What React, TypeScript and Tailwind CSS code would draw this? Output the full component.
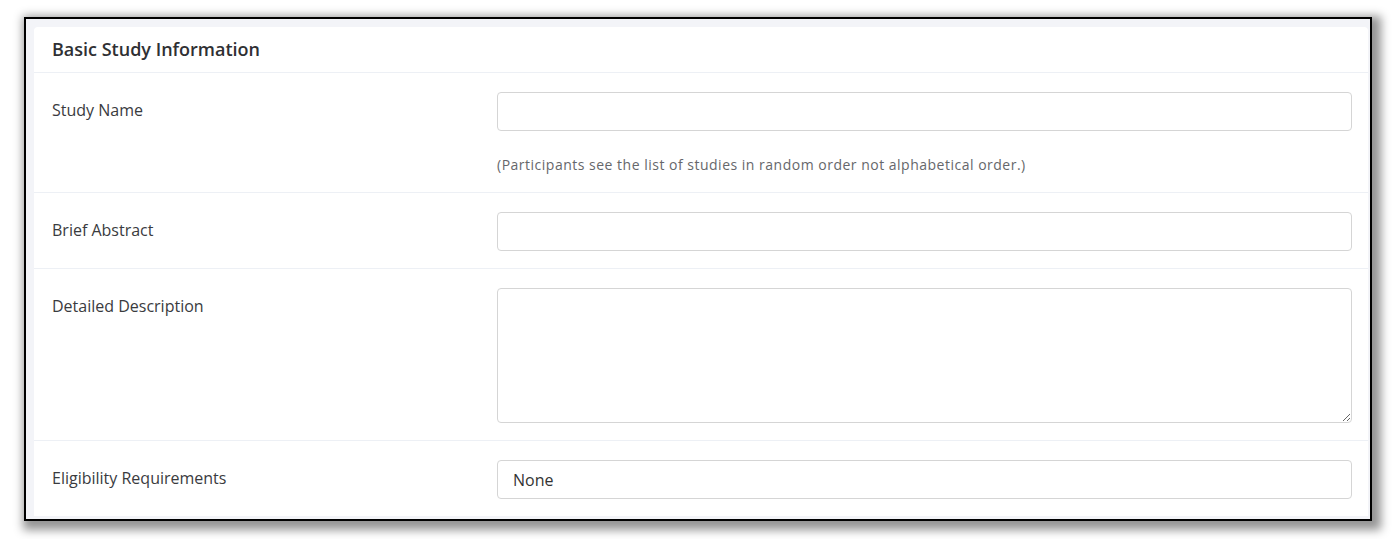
const rows = [
  { label: "Study Name", kind: "input", value: "", help: "(Participants see the list of studies in random order not alphabetical order.)" },
  { label: "Brief Abstract", kind: "input", value: "" },
  { label: "Detailed Description", kind: "textarea", value: "" },
  { label: "Eligibility Requirements", kind: "input", value: "None" },
];

export default function App() {
  return (
    <div className="min-h-[539px] bg-white pl-[24px] pt-[17px] font-['Open_Sans',sans-serif]">
      <div className="w-[1348px] border-2 border-black bg-[#f3f4f8] pb-[3px] pl-[8px] pr-[2px] pt-[8px] shadow-[4px_4px_9px_5px_rgba(0,0,0,0.42)]">
        <div className="rounded-t-[4px] bg-white">
          <div className="flex h-[46px] items-center border-b border-[#edf0f5] pl-[18px]">
            <h2 className="text-[18px] font-semibold text-[#2f3033]">Basic Study Information</h2>
          </div>
          {rows.map((row, i) => (
            <div
              key={row.label}
              className={`grid grid-cols-[445px_855px] pl-[18px] pr-[16px] pt-[19px] pb-[17px] ${i < rows.length - 1 ? "border-b border-[#edf0f5]" : ""}`}
            >
              <div className="pt-[7px] text-[16px] leading-[22px] text-[#3a3b3e]">{row.label}</div>
              <div>
                {row.kind === "textarea" ? (
                  <textarea
                    className="block h-[135px] w-full rounded-[4px] border border-[#d5d5d5] px-[15px] py-[8px] text-[16px] outline-none"
                    defaultValue={row.value}
                  />
                ) : (
                  <input
                    className="block h-[39px] w-full rounded-[4px] border border-[#d5d5d5] px-[15px] text-[16px] text-[#333] outline-none"
                    defaultValue={row.value}
                  />
                )}
                {row.help && (
                  <p className="mt-[24px] text-[14px] leading-[20px] tracking-[0.5px] text-[#66676b]">{row.help}</p>
                )}
              </div>
            </div>
          ))}
        </div>
      </div>
    </div>
  );
}
